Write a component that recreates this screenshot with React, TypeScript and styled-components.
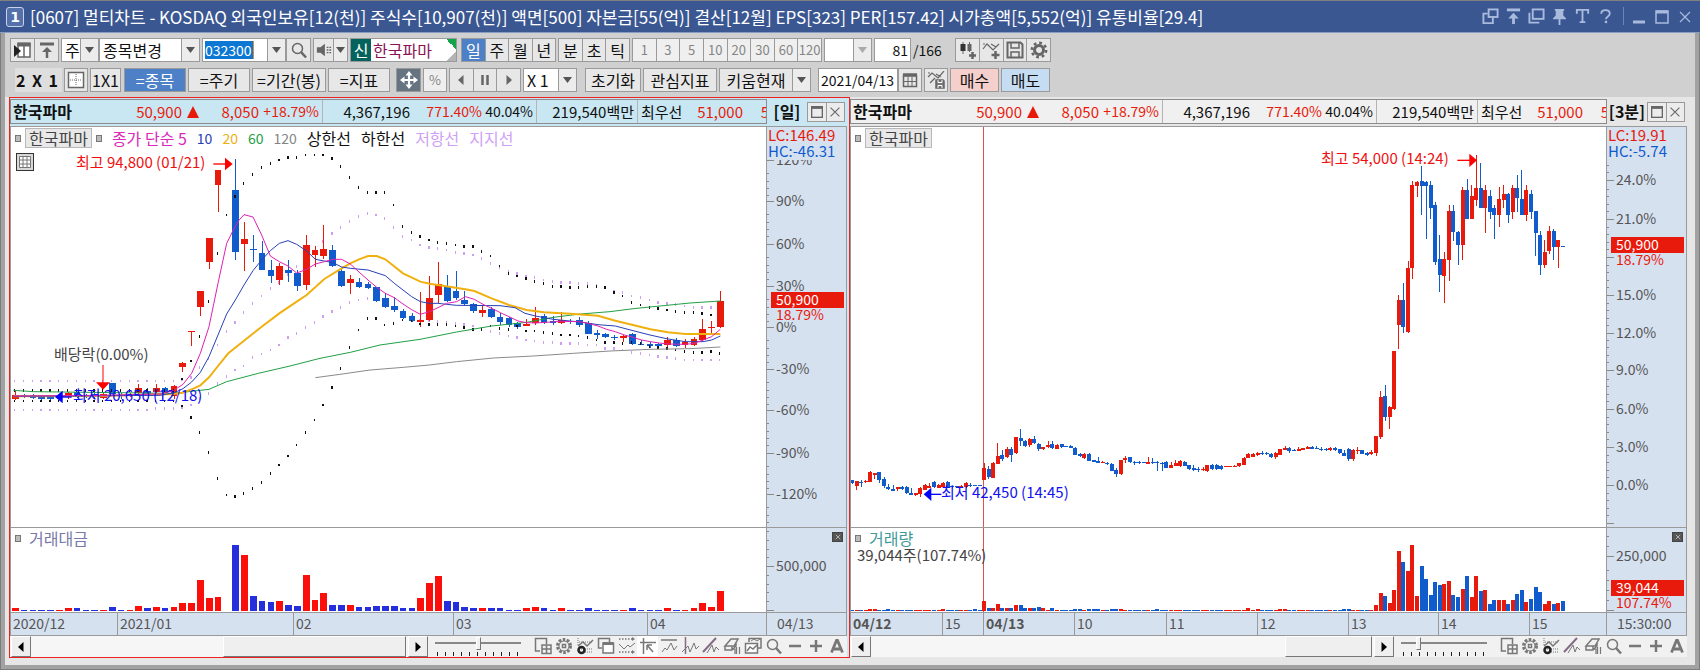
import React from 'react';
import styled, { createGlobalStyle, css } from 'styled-components';

const GlobalStyle = createGlobalStyle`
  *, *::before, *::after { box-sizing: border-box; }
  body {
    margin: 0;
    background: #e6e6e6;
    color: #111;
    font: 16px/20px "Noto Sans CJK KR", sans-serif;
  }
  button, input, select { font: inherit; color: inherit; margin: 0; padding: 0; border-radius: 0; }
`;

const RED = '#e81a0c';
const BLUE = '#105ccd';
const LINE = '#9a9a9a';

/* ------------------------------------------------------------------ icons */

const Svg = styled.svg<{ $size?: number }>`
  display: block;
  flex: none;
  width: ${(p) => p.$size ?? 18}px;
  height: ${(p) => p.$size ?? 18}px;
  fill: none;
  stroke: currentColor;
  stroke-width: 1.5;
`;

const icons: Record<string, React.ReactNode> = {
  panel: (<><rect x="4" y="2.5" width="12" height="13.500" fill="#fff" /><path d="M3.500 3.500h13" strokeWidth="4" /><path d="M10 4v12" /><path d="M0 4v12l7-6z" fill="#222" stroke="none" /></>),
  top: (<><path d="M2 3h14" strokeWidth="3" /><path d="M9 17V9" strokeWidth="2.5" /><path d="M4 11l5-5 5 5z" fill="currentColor" stroke="none" /></>),
  search: (<><circle cx="7.500" cy="7.500" r="5" /><path d="M11 11l5 5.500" strokeWidth="2.5" /></>),
  speaker: (<><path d="M1 6h4l5-4v14l-5-4H1z" fill="currentColor" stroke="none" /><path d="M12 6h2M15 6h2M12 9h2M15 9h2M12 12h2M15 12h2" strokeWidth="1.500" /></>),
  candles: (<><path d="M5 1v12M11.500 1v10" strokeWidth="1" /><rect x="2.500" y="3" width="5" height="7" fill="#333" stroke="none" /><rect x="9.500" y="3" width="4" height="7" fill="currentColor" stroke="none" /><path d="M14.500 11v7M11 14.500h7" strokeWidth="2.5" /></>),
  lineAdd: (<><path d="M1 8l4-5 6 6 6-6M1 3h2M9 3l5 3" strokeWidth="1.200" /><path d="M13.500 10v8M9.500 14h8" strokeWidth="2.5" /></>),
  save: (<><path d="M1.500 1.500h13l2 2v13h-15z" strokeWidth="2" /><path d="M5 2v5h8V2M5 16v-5h8v5" /></>),
  gear: (<><circle cx="9" cy="9" r="4.500" strokeWidth="3" /><circle cx="9" cy="9" r="7.200" strokeWidth="2.500" strokeDasharray="2.800 2.850" /></>),
  grid: (<><rect x="1.500" y="1.500" width="15" height="15" fill="#fff" /><path d="M9 3v12M3 9h12" strokeWidth="1" strokeDasharray="1 1" /></>),
  move: (<><path d="M9 3v12M3 9h12" strokeWidth="2.200" /><path d="M9 0l3.500 4.500h-7zM9 18l3.500-4.500h-7zM0 9l4.500-3.500v7zM18 9l-4.500-3.500v7z" fill="currentColor" stroke="none" /></>),
  prev: <path d="M11.500 4v10L6 9z" fill="currentColor" stroke="none" />,
  pause: <path d="M6.500 4v10M11.500 4v10" strokeWidth="2.5" />,
  next: <path d="M6.500 4v10L12 9z" fill="currentColor" stroke="none" />,
  calendar: (<><path d="M2.500 4.500h13v11h-13z" /><path d="M2 4h14" strokeWidth="3.500" /><path d="M7 6v9M11 6v9M3 10.500h12" strokeWidth="1" /></>),
  lineSave: (<><path d="M1 6l4-4 6 5 6-7M1 2h2M9 3l5 3M3 12l5-5" strokeWidth="1.200" /><path d="M9 9h7l1 1v7H9z" fill="#777" /><path d="M11 9v2.500h4V9M11 17v-2.500h4V17" strokeWidth="1" stroke="#fff" /></>),
  copyGrid: (<><path d="M6 14H1.500V1.500h11V7" /><path d="M8 8h9v8.500H8zM12.500 8v8.500M8 12h9" /></>),
  gearDash: (<><circle cx="9" cy="9" r="6.500" strokeWidth="3" strokeDasharray="2.600 1.480" /><circle cx="9" cy="9" r="5" strokeWidth="1" /><rect x="7.500" y="7.500" width="3" height="3" /></>),
  chartDot: (<><path d="M2 1v8M3 5h13M3 12h13M9 15h8" strokeWidth="1" strokeDasharray="1 1" /><path d="M2 9l5-4 4 4 6-6" /><circle cx="5.500" cy="13" r="3" stroke="#222" strokeWidth="2.5" /></>),
  windows: (<><path d="M5 11H1.500V1.500h11V5" /><rect x="6" y="6" width="10.500" height="10" fill="#fff" /><path d="M6 6.500h10" strokeWidth="3" /></>),
  dotted: (<><path d="M1 2h13M1 15h13" strokeDasharray="1.500 1.500" /><path d="M14 0l3 2-3 2zM14 13l3 2-3 2z" fill="currentColor" stroke="none" /><path d="M1 7l5 5 4-4 2 2 5-4" strokeWidth="1" /></>),
  cursor: (<><path d="M4.500 1v16M1 5.500h16" /><path d="M8 8l6 7M8 8v5M8 8h5" /></>),
  peakTop: (<><path d="M1 3h16" /><path d="M2 15l3-4 2 2 4-7 3 7 3-4" strokeWidth="1" /></>),
  peakV: (<><path d="M4.500 0v17" stroke="#846a85" /><path d="M1 15l6-6 2 6 4-9 2 6 3-3" strokeWidth="1" /></>),
  peakD: (<><path d="M1 15L14 1" stroke="#846a85" strokeWidth="2" /><path d="M5 16l5-8 2 7 2-5 3 3" strokeWidth="1" /></>),
  eraser: (<><path d="M2 9l6-7h7l-4 7zM2 9v4h7l4-4V5M9 9v4" /><path d="M10 12h2v5M13.500 10v7M16.500 10v7" strokeWidth="1.200" /></>),
  images: (<><path d="M5 5V1.500h12V11h-3" /><path d="M7 4l3-2 3 2 3-2" strokeWidth="1" /><rect x="1.500" y="6.500" width="12" height="9.500" fill="#fff" /><path d="M3 14l3-4 3 2 4-4" /></>),
  minus: <path d="M3 9h12" strokeWidth="2.5" />,
  plus: <path d="M3 9h12M9 3v12" strokeWidth="2.5" />,
  letterA: <path d="M3.500 15.500L8.500 3.500h1l5 12M5.500 12h7" strokeWidth="2.800" />,
  link: (<><rect x="7" y="1.500" width="9.500" height="8" strokeWidth="2" /><path d="M6 6H1.500v10h10v-6" strokeWidth="2" /></>),
  toTop: (<><path d="M2 2h14" strokeWidth="3" /><path d="M9 17V9" strokeWidth="3" /><path d="M3.500 11L9 5l5.500 6z" fill="currentColor" stroke="none" /></>),
  stack: (<><rect x="5" y="1.500" width="11.500" height="10" strokeWidth="2" /><path d="M1.500 5v10.500H12" strokeWidth="2" /></>),
  pin: (<path d="M4 1h10v2h-1v5l3 3v1h-6v6H8v-6H2v-1l3-3V3H4z" fill="currentColor" stroke="none" />),
  text: (<><path d="M3 6V2h12v4M9 2v13M6 15h6" strokeWidth="2" /></>),
  help: (<><path d="M4.500 6c0-5 9-5 9 0 0 3-4 3-4 6" strokeWidth="2" /><path d="M9.500 13.500V16" strokeWidth="2.500" /></>),
  winMin: <path d="M3 14h12" strokeWidth="3" />,
  winMax: (<><rect x="3" y="3" width="12" height="12" /><path d="M3 4h12" strokeWidth="3" /></>),
  close: <path d="M4 4l10 10M14 4L4 14" strokeWidth="1.200" />,
};

const Icon = ({ name, size }: { name: string; size?: number }) => (
  <Svg viewBox="0 0 18 18" $size={size} aria-hidden="true">{icons[name]}</Svg>
);

/* ------------------------------------------------------------- window shell */

const Window = styled.main`
  border-top: 1px solid #808080;
`;

const TitleBar = styled.header`
  display: flex;
  align-items: center;
  height: 32px;
  padding: 0 6px;
  background: #3a5792;
  border-bottom: 1px solid #8a9cc2;
  color: #fff;
`;

const WindowNumber = styled.span`
  width: 18px;
  height: 20px;
  margin-right: 6px;
  border: 1px solid #c8d2e8;
  border-radius: 3px;
  background: #5571ab;
  font: bold 14px/18px "DejaVu Sans", sans-serif;
  text-align: center;
`;

const Title = styled.h1`
  flex: 1;
  margin: 0;
  font-size: 17px;
  font-weight: 400;
  line-height: 30px;
  white-space: pre;
`;

const TitleActions = styled.div`
  display: flex;
  gap: 5px;
  color: #a9bbdd;
`;

const TitleButton = styled.button`
  display: grid;
  place-items: center;
  width: 18px;
  height: 20px;
  border: 0;
  background: none;
`;

const TitleDivider = styled.span`
  width: 1px;
  height: 18px;
  margin: 0 1px 0 4px;
  background: #6f86b5;
`;

const Frame = styled.div`
  padding: 0 4px 4px;
  border: 1px solid #7c7c7c;
  border-top: 0;
  background: #a2a2a2;
`;

/* ---------------------------------------------------------------- toolbars */

const Toolbar = styled.div`
  display: flex;
  flex-direction: column;
  gap: 6px;
  padding: 5px;
  background: #d0d0d0;
`;

const ToolRow = styled.div<{ $indent?: boolean }>`
  display: flex;
  gap: 2px;
  height: 24px;
  padding-left: ${(p) => (p.$indent ? 5 : 0)}px;
`;

const Group = styled.div<{ $w: number; $gap?: number }>`
  display: flex;
  flex: none;
  width: ${(p) => p.$w}px;
  margin-left: ${(p) => p.$gap ?? 0}px;
`;

type Tone = 'plain' | 'active' | 'dark' | 'buy' | 'sell' | 'dim';
const tones: Record<Tone, [string, string]> = {
  plain: ['#e7e7e7', '#111'],
  active: ['#4d80c6', '#fff'],
  dark: ['#667482', '#fff'],
  buy: ['#f4cfcb', '#111'],
  sell: ['#c5dcf2', '#111'],
  dim: ['#efefef', '#858585'],
};

const ToolButton = styled.button<{ $tone?: Tone; $icon?: boolean }>`
  display: grid;
  flex: 1;
  place-items: center;
  min-width: 0;
  height: 24px;
  border: 1px solid ${LINE};
  background: ${(p) => tones[p.$tone ?? 'plain'][0]};
  color: ${(p) => (p.$icon ? '#666' : tones[p.$tone ?? 'plain'][1])};
  line-height: 22px;
  white-space: nowrap;
  & + & { border-left-width: 0; }
  ${(p) => p.$tone === 'dark' && css`color: #fff;`}
  ${(p) => p.$tone === 'dim' && css`font-size: 13px;`}
`;

const ComboBox = styled.div<{ $w: number }>`
  display: grid;
  flex: none;
  width: ${(p) => p.$w}px;
  height: 24px;
  border: 1px solid ${LINE};
  background: #fff;
  & > * { grid-area: 1 / 1; }
`;

const Select = styled.select`
  width: 100%;
  height: 22px;
  padding-left: 3px;
  appearance: none;
  border: 0;
  background: none;
`;

const Drop = styled.span<{ $dim?: boolean }>`
  display: grid;
  place-items: center;
  justify-self: end;
  width: 18px;
  height: 22px;
  border-left: 1px solid ${LINE};
  background: #ececec;
  color: ${(p) => (p.$dim ? '#aaa' : '#555')};
  pointer-events: none;
`;

const Arrow = () => (
  <svg width="9" height="6" viewBox="0 0 9 6" aria-hidden="true"><path d="M0 0h9L4.500 6z" fill="currentColor" /></svg>
);

const Combo = ({ w, label, value, dim }: { w: number; label: string; value: string; dim?: boolean }) => (
  <ComboBox $w={w}>
    <Select aria-label={label} defaultValue={value}><option>{value}</option></Select>
    <Drop $dim={dim}><Arrow /></Drop>
  </ComboBox>
);

const TextBox = styled.input<{ $right?: boolean }>`
  flex: 1;
  min-width: 0;
  height: 24px;
  padding: 0 2px;
  border: 1px solid ${LINE};
  background: #fff;
  font-size: 14px;
  text-align: ${(p) => (p.$right ? 'right' : 'left')};
`;

const CodeBox = styled.div`
  display: flex;
  flex: 1;
  align-items: center;
  padding-left: 2px;
  border: 1px solid ${LINE};
  background: #fff;
`;

const CodeInput = styled.input`
  width: 49px;
  height: 18px;
  border: 0;
  border-right: 1px solid #e08a30;
  background: #0d78d4;
  color: #fff;
  font-size: 14px;
`;

const SplitButton = styled.button`
  display: grid;
  place-items: center;
  width: 18px;
  height: 24px;
  border: 1px solid ${LINE};
  border-left: 0;
  background: #ececec;
  color: #555;
`;

const StockName = styled.div`
  display: flex;
  flex: 1;
  align-items: center;
  border: 1px solid ${LINE};
  background:
    linear-gradient(45deg, transparent 50%, #12a54a 50%) 100% 0 / 10px 10px no-repeat,
    linear-gradient(135deg, transparent 50%, #b4b4b4 50%) 100% 100% / 10px 10px no-repeat,
    #fff;
  color: #8b1157;
`;

const NewBadge = styled.span`
  width: 20px;
  height: 22px;
  margin-right: 2px;
  background: #04645d;
  color: #fff;
  line-height: 22px;
  text-align: center;
`;

const BarTotal = styled.span`
  width: 40px;
  font-size: 14px;
  line-height: 24px;
`;

const LayoutLabel = styled.span`
  display: flex;
  justify-content: space-between;
  width: 47px;
  padding: 0 4px 0 1px;
  background: #dedede;
  font-weight: 700;
  line-height: 24px;
`;

/* ----------------------------------------------------------------- panels */

const Panels = styled.section`
  display: grid;
  grid-template-columns: minmax(0, 841fr) minmax(0, 837fr);
  padding: 0 8px 7px 4px;
  background: #e6e6e6;
`;

const Panel = styled.article<{ $active?: boolean }>`
  ${(p) => p.$active
    ? css`border: 1px solid #f02020; padding-right: 2px; background: #c8e7f2;`
    : css`padding: 1px 0;`}
`;

const PanelHead = styled.div`
  display: flex;
  height: 28px;
  padding: 1px 2px 2px 0;
`;

const Quote = styled.div<{ $active?: boolean }>`
  display: flex;
  flex: 1;
  min-width: 0;
  overflow: hidden;
  border: 1px solid #8c8c8c;
  background: ${(p) => (p.$active ? '#c8e7f2' : '#f0f0f0')};
  font-size: 15px;
  line-height: 23px;
  white-space: nowrap;
`;

const Cell = styled.span<{ $w: number; $up?: boolean; $rule?: boolean; $left?: boolean; $small?: boolean }>`
  flex: none;
  width: ${(p) => p.$w}px;
  padding: ${(p) => (p.$rule ? '0 3px 0 0' : p.$left ? '0 0 0 3px' : '0')};
  border-right: ${(p) => (p.$rule ? '1px solid #b4b4b4' : '0')};
  color: ${(p) => (p.$up ? RED : '#111')};
  font-size: ${(p) => (p.$small ? 14 : 15)}px;
  text-align: ${(p) => (p.$left ? 'left' : 'right')};
`;

const QuoteName = styled.strong`
  flex: none;
  width: 100px;
  padding-left: 2px;
  font-size: 16px;
`;

const UpMark = styled.svg`
  flex: none;
  width: 12px;
  height: 12px;
  margin: 6px 0 0 5px;
  fill: ${RED};
`;

const Period = styled.strong`
  flex: none;
  width: 40px;
  font-size: 16px;
  line-height: 25px;
  text-align: center;
`;

const PanelButtons = styled.div`
  display: flex;
  width: 38px;
  height: 20px;
  margin-top: 3px;
`;

const PanelButton = styled.button`
  display: grid;
  flex: 1;
  place-items: center;
  border: 1px solid ${LINE};
  background: #ececec;
  color: #666;
  & + & { border-left: 0; }
`;

const Chart = styled.div`
  display: grid;
  grid-template-columns: minmax(0, 1fr) 81px;
  border-left: 1px solid ${LINE};
`;

const Plot = styled.div`
  position: relative;
  border-top: 1px solid ${LINE};
  background: #fff;
`;

const AxisCell = styled.div`
  position: relative;
  border: 1px solid ${LINE};
  border-bottom: 0;
  background: #d6e1f0;
`;

const Canvas = styled.svg<{ $h: number }>`
  display: block;
  width: 100%;
  height: ${(p) => p.$h}px;
`;

const AxisSvg = styled.svg`
  display: block;
`;

const AxisText = styled.text<{ $fill?: string; $large?: boolean }>`
  fill: ${(p) => p.$fill ?? '#555'};
  font-size: ${(p) => (p.$large ? 15 : 14)}px;
`;

const Legend = styled.div`
  position: absolute;
  top: 1px;
  left: 4px;
  display: flex;
  align-items: center;
  gap: 10px;
  line-height: 18px;
  white-space: nowrap;
`;

const LegendName = styled.span`
  display: flex;
  align-items: center;
  gap: 4px;
`;

const Dot = styled.i`
  width: 6px;
  height: 7px;
  border: 1px solid #777;
  background: #bbb;
`;

const NameTag = styled.span`
  padding: 0 3px;
  border: 1px solid #b8b8b8;
  background: #e8e8e8;
  color: #444;
`;

const LegendItem = styled.span<{ $c: string; $number?: boolean }>`
  color: ${(p) => p.$c};
  font-size: ${(p) => (p.$number ? 14 : 16)}px;
`;

const TableButton = styled.button`
  position: absolute;
  top: 26px;
  left: 5px;
  display: grid;
  place-items: center;
  width: 18px;
  height: 18px;
  border: 1px solid #333;
  background: #d8d8d8;
  color: #666;
`;

const Note = styled.span<{ $x: number; $y: number; $c: string }>`
  position: absolute;
  left: ${(p) => (p.$x / 755) * 100}%;
  top: ${(p) => p.$y}px;
  color: ${(p) => p.$c};
  font-size: 15px;
  white-space: nowrap;
`;

const VolumeTitle = styled.div<{ $c: string }>`
  position: absolute;
  top: 0;
  left: 4px;
  display: flex;
  align-items: center;
  gap: 8px;
  color: ${(p) => p.$c};
`;

const VolumeClose = styled.button`
  position: absolute;
  top: 4px;
  right: 3px;
  display: grid;
  place-items: center;
  width: 11px;
  height: 10px;
  border: 1px solid #444;
  background: #555;
  color: #fff;
`;

const TimeAxis = styled.div<{ $cols: number[] }>`
  display: grid;
  grid-template-columns: ${(p) => p.$cols.map((c) => `minmax(0, ${c}fr)`).join(' ')};
  height: 24px;
  border-top: 1px solid ${LINE};
  border-bottom: 1px solid ${LINE};
  background: #d6e1f0;
`;

const TimeLabel = styled.span<{ $strong?: boolean }>`
  padding-left: 2px;
  color: #555;
  font-size: 14px;
  font-weight: ${(p) => (p.$strong ? 700 : 400)};
  line-height: 20px;
  & + & { border-left: 1px solid ${LINE}; }
`;

const TimeEnd = styled.div`
  padding-left: 10px;
  border: 1px solid ${LINE};
  background: #d6e1f0;
  color: #555;
  font-size: 14px;
  line-height: 20px;
`;

const Foot = styled.div`
  display: flex;
  height: 21px;
  padding-left: 1px;
  background: #f1f1f1;
`;

const ScrollBar = styled.div`
  display: flex;
  flex: 1;
  min-width: 0;
  background: #f6f6f6;
`;

const ScrollButton = styled.button`
  display: grid;
  flex: none;
  place-items: center;
  width: 20px;
  border: 1px solid;
  border-color: #fff #777 #777 #fff;
  background: #efefef;
  color: #000;
`;

const Track = styled.div`
  flex: 1;
`;

const Thumb = styled.div<{ $w: string }>`
  width: ${(p) => p.$w};
  margin-right: 2px;
  border: 1px solid;
  border-color: #fff #777 #777 #fff;
  background: #efefef;
`;

const ZoomBox = styled.div`
  flex: none;
  width: 86px;
  margin: 0 11px 0 7px;
`;

const ZoomSlider = styled.input`
  display: block;
  width: 100%;
  height: 14px;
  appearance: none;
  background: linear-gradient(#888, #888) 0 6px / 100% 2px no-repeat;
  &::-webkit-slider-thumb {
    appearance: none;
    width: 5px;
    height: 13px;
    border: 1px solid;
    border-color: #fff #777 #777 #fff;
    background: #f1f1f1;
  }
`;

const ZoomTicks = styled.div`
  height: 4px;
  margin: 2px 2px 0;
  background: repeating-linear-gradient(90deg, #222 0 1px, transparent 1px 8px);
`;

const FootTools = styled.div`
  display: flex;
  color: #777;
`;

const FootButton = styled.button<{ $on?: boolean }>`
  display: grid;
  place-items: center;
  width: 21px;
  height: 20px;
  border: 0;
  background: ${(p) => (p.$on ? '#fff' : 'none')};
`;

/* ------------------------------------------------------------- chart data */
/* Chart units run three to a pixel. A bar is [open/close direction, high, body top, body bottom, low]. */

type Bar = number[] | null;

const dailyBars: Bar[] = [
  [1, 813, 825, 837, 840], [0, 821, 826, 829, 833], [0, 821, 825, 834, 838], [0, 826, 829, 838, 840], [0, 829, 832, 836, 840],
  [1, 822, 827, 831, 834], [1, 815, 820, 830, 838], [0, 815, 817, 828, 833], [0, 822, 825, 828, 833], [0, 818, 823, 830, 835],
  [1, 818, 822, 833, 838], [0, 788, 790, 822, 828], [0, 818, 824, 827, 836], [1, 820, 824, 827, 830], [1, 792, 805, 820, 825],
  [0, 805, 812, 822, 826], [1, 792, 803, 815, 820], [0, 800, 803, 820, 824], [1, 795, 798, 828, 838], [1, 727, 730, 742, 756],
  [1, 633, 633, 637, 678], [1, 514, 514, 562, 588], [1, 355, 355, 427, 448], [1, 150, 150, 194, 277], null,
  [0, 116, 210, 396, 419], [1, 307, 357, 371, 453], [0, 345, 386, 389, 427], [0, 364, 398, 449, 450], [0, 420, 450, 468, 490],
  [1, 430, 439, 479, 495], [0, 420, 450, 458, 487], [0, 450, 458, 497, 513], [1, 345, 375, 494, 510], [1, 378, 390, 405, 441],
  [1, 315, 386, 408, 418], [0, 375, 390, 437, 440], [0, 445, 453, 497, 500], [1, 465, 477, 490, 521], [0, 473, 487, 501, 503],
  [0, 485, 491, 505, 508], [0, 500, 502, 543, 546], [0, 520, 533, 562, 563], [0, 530, 558, 569, 577], [0, 568, 573, 595, 597],
  [0, 578, 588, 604, 607], [1, 517, 600, 606, 621], [1, 468, 533, 599, 603], [1, 427, 491, 524, 548], [0, 465, 502, 543, 546],
  [0, 453, 513, 534, 541], [0, 513, 540, 551, 556], [0, 550, 552, 573, 580], [1, 555, 570, 580, 592], [0, 560, 567, 590, 593],
  [0, 580, 590, 606, 614], [0, 590, 593, 616, 620], [0, 605, 609, 621, 627], [1, 598, 611, 617, 618], [1, 562, 593, 609, 614],
  [0, 583, 587, 609, 611], [0, 588, 604, 608, 614], [1, 577, 600, 609, 611], [0, 597, 602, 606, 611], [0, 590, 600, 614, 620],
  [0, 603, 608, 641, 642], [0, 630, 640, 644, 656], [0, 640, 642, 652, 655], [0, 645, 651, 655, 660], [1, 645, 648, 654, 667],
  [0, 640, 642, 672, 676], [0, 660, 672, 675, 676], [0, 665, 672, 679, 683], [0, 670, 672, 678, 686], [1, 650, 659, 675, 687],
  [0, 655, 659, 677, 680], [1, 658, 667, 674, 684], [1, 652, 656, 674, 678], [1, 597, 627, 659, 663], [1, 603, 620, 625, 638],
  [1, 514, 544, 621, 623],
];

const dailyVolume = [
  8, 4, 4, 4, 4, 4, 8, 8, 4, 4, 4, 12, 4, 4, 15, 8, 12, 8, 12, 23, 23, 94, 38, 42, 0, 199, 169, 45, 30, 27, 31, 19, 16, 109, 34, 53, 19, 19, 19, 12,
  12, 16, 16, 16, 8, 8, 38, 83, 105, 30, 27, 12, 8, 8, 8, 8, 4, 4, 8, 12, 8, 4, 8, 4, 4, 8, 4, 4, 4, 4, 8, 4, 4, 4, 8, 4, 4, 8, 23, 12, 61,
];

const flat = (y: number, n: number) => Array<number>(n).fill(y);

const upperLimit = [...flat(811, 19), 777, 723, 649, 545, 401, 285, 230, 191, 164, 143, 131, 120, 112, 112, 105, 105, 105, 116, 139, 172, 203, 217, 217, 217,
  255, 319, 338, 349, 360, 367, 371, 375, 379, 379, 394, 408, 438, 460, 468, 476, 484, 491, 499, 499, 502, 502, 499, 499, 502, 517, 528, 547, 555, 562, 566, 570, 574, 577, 577, 581, 585];
const lowerLimit = [...flat(843, 19), 858, 893, 937, 997, 1076, 1125, 1129, 1121, 1106, 1087, 1061, 1035, 1008, 975, 937, 900, 855, 802, 746, 682, 630, 596, 596, 615,
  611, 600, 603, 612, 614, 614, 614, 618, 622, 629, 629, 618, 626, 629, 618, 633, 633, 637, 641, 645, 645, 648, 652, 660, 667, 668, 671, 667, 671, 679, 682, 685, 690, 694, 697, 697, 694, 701];
const resistance = [...flat(783, 19), 778, 772, 742, 715, 675, 634, 607, 577, 551, 528, 506, 488, 464, 440, 418, 395, 364, 341, 322, 304, 290, 281, 285, 296,
  322, 349, 360, 375, 382, 386, 390, 397, 401, 405, 416, 431, 442, 453, 461, 468, 472, 480, 484, 487, 487, 491, 491, 495, 502, 513, 517, 528, 532, 540, 547, 550, 553, 558, 562, 562, 562];
const support = [...flat(870, 16), 866, 866, 866, 862, 855, 835, 820, 790, 769, 750, 738, 712, 702, 690, 675, 653, 641, 622, 607, 589, 574, 562, 547, 540, 536, 536, 550,
  565, 580, 590, 600, 603, 605, 607, 610, 614, 618, 626, 634, 641, 648, 652, 660, 663, 667, 667, 671, 671, 671, 675, 675, 686, 686, 690, 697, 701, 705, 709, 712, 716, 720, 720, 720, 720, 720];

const averages: { color: string; width: number; points: string }[] = [
  { color: '#8a8a8a', width: 1, points: '946,773 1020,763 1110,750 1210,742 1288,735 1370,725 1480,714 1600,708 1720,700 1830,693 1950,688 2070,686 2161,681' },
  { color: '#22a045', width: 1, points: '40,811 100,815 520,820 627,808 680,785 775,760 870,738 960,715 1051,697 1140,675 1260,658 1370,636 1475,618 1580,607 1660,592 1740,582 1830,575 1900,566 1980,558 2070,549 2161,543' },
  { color: '#f0b010', width: 2, points: '40,829 300,828 520,822 549,818 580,806 601,796 627,772 654,738 685,700 732,662 785,620 838,580 890,545 920,525 973,477 1025,445 1051,430 1077,418 1104,408 1130,408 1156,418 1209,460 1261,485 1288,491 1314,495 1396,508 1423,513 1475,535 1527,555 1580,570 1632,577 1711,581 1794,587 1846,602 1899,615 1951,628 2004,637 2056,642 2161,642' },
  { color: '#2840b8', width: 1, points: '40,829 480,826 523,818 549,806 575,786 601,757 627,710 654,645 680,582 706,540 732,495 759,452 785,420 811,392 838,370 864,362 890,373 920,393 946,418 973,423 999,428 1025,441 1051,445 1104,450 1156,467 1183,490 1235,530 1261,545 1288,550 1314,550 1340,553 1370,556 1500,557 1545,563 1575,580 1606,588 1660,598 1740,606 1794,614 1846,618 1899,632 1950,645 2004,657 2056,665 2109,665 2135,660 2161,648' },
  { color: '#e020b0', width: 1, points: '40,828 300,826 480,822 520,812 549,793 575,760 601,700 627,620 654,490 680,370 700,330 716,302 732,284 759,291 785,345 811,408 838,425 864,438 890,459 920,448 946,432 973,425 999,418 1025,418 1051,432 1077,456 1104,480 1130,502 1156,520 1183,533 1209,552 1235,569 1261,583 1288,575 1314,563 1340,550 1370,545 1396,530 1423,538 1449,553 1475,565 1501,578 1527,590 1554,603 1580,608 1606,609 1685,604 1738,605 1764,610 1794,618 1820,628 1846,635 1873,645 1899,652 1925,660 1951,665 1978,669 2004,672 2056,673 2083,670 2109,660 2135,650 2161,628' },
];

const morningBars: number[][] = [
  [0, 240, 240, 250, 252], [1, 242, 244, 258, 270], [0, 240, 245, 250, 262], [1, 240, 243, 247, 250], [1, 212, 217, 246, 246], [1, 218, 218, 224, 236],
  [0, 217, 217, 240, 250], [0, 232, 236, 258, 264], [0, 252, 262, 267, 270], [0, 255, 266, 272, 274], [1, 260, 262, 268, 272], [0, 258, 260, 268, 270],
  [0, 258, 260, 280, 282], [0, 265, 280, 285, 286], [1, 278, 280, 286, 288], [1, 262, 264, 282, 290], [1, 253, 256, 270, 270], [1, 248, 258, 264, 264],
  [0, 243, 247, 262, 264], [1, 252, 256, 264, 264], [1, 245, 248, 262, 265], [0, 243, 245, 262, 262], [0, 258, 259, 262, 264], [0, 258, 259, 262, 264],
  [1, 255, 257, 262, 264], [1, 247, 249, 262, 265], [0, 250, 255, 259, 262], [0, 255, 255, 258, 258], [0, 255, 255, 258, 258],
  [1, 190, 205, 240, 240], [0, 198, 207, 230, 236], [1, 187, 188, 234, 234], [1, 130, 169, 191, 193], [0, 150, 166, 176, 184], [1, 140, 146, 170, 173],
  [0, 142, 146, 164, 187], [1, 110, 111, 158, 162], [0, 87, 113, 122, 138], [0, 120, 124, 138, 142], [1, 113, 116, 135, 142], [0, 108, 116, 130, 131],
  [0, 130, 132, 146, 153], [1, 140, 141, 146, 150], [1, 124, 136, 142, 145], [0, 122, 133, 145, 147], [1, 132, 134, 146, 148], [0, 131, 133, 141, 143],
  [0, 137, 138, 141, 142], [0, 135, 137, 143, 144], [0, 140, 143, 165, 166], [0, 160, 162, 168, 170], [1, 160, 162, 173, 176], [0, 160, 162, 182, 184],
  [0, 180, 181, 185, 187], [0, 172, 183, 189, 190], [1, 183, 185, 189, 190], [0, 187, 188, 192, 196], [0, 190, 192, 212, 214], [0, 205, 210, 222, 231],
  [1, 180, 181, 222, 224], [1, 169, 173, 181, 189], [0, 170, 172, 186, 190], [0, 183, 186, 190, 196], [0, 184, 187, 190, 192], [0, 186, 187, 190, 190],
  [1, 172, 186, 191, 192], [0, 174, 186, 190, 192], [0, 184, 186, 190, 214], [0, 186, 188, 191, 214], [0, 184, 187, 203, 205], [1, 187, 196, 203, 203],
  [1, 180, 190, 198, 199], [1, 180, 184, 198, 200], [0, 183, 185, 197, 198], [0, 194, 195, 208, 210], [0, 195, 205, 210, 213], [0, 200, 207, 211, 216],
  [1, 200, 206, 211, 212], [1, 194, 195, 213, 215], [0, 193, 195, 208, 210], [0, 193, 194, 208, 210], [0, 196, 198, 208, 210], [1, 197, 198, 201, 202],
  [1, 197, 198, 201, 202], [1, 196, 197, 201, 202], [1, 189, 190, 198, 200], [1, 170, 173, 195, 195], [1, 158, 162, 175, 175], [1, 158, 161, 170, 171],
  [1, 156, 159, 165, 167], [0, 152, 158, 163, 166], [0, 157, 159, 163, 166], [0, 160, 162, 172, 173], [1, 157, 160, 172, 176], [1, 146, 147, 164, 166],
  [1, 139, 143, 150, 150], [0, 142, 144, 154, 160], [0, 147, 149, 153, 153], [1, 141, 146, 153, 154], [1, 143, 145, 149, 150], [1, 138, 140, 147, 148],
  [0, 138, 140, 146, 147], [0, 139, 143, 146, 146], [0, 141, 146, 150, 152], [0, 145, 147, 151, 152], [1, 142, 144, 151, 152], [0, 141, 144, 150, 154],
  [0, 146, 148, 160, 162], [0, 150, 158, 168, 168], [0, 145, 148, 176, 182], [1, 148, 150, 176, 182], [1, 142, 150, 153, 162], [0, 150, 151, 161, 163],
  [0, 157, 160, 164, 167], [1, 150, 157, 161, 165], [1, 108, 109, 160, 167],
];

const minuteBars: Bar[] = [
  ...morningBars.map(([d, h, t, b, l]) => [d, h + 840, t + 840, b + 840, l + 840]),
  [1, 813, 832, 950, 958], [0, 795, 828, 891, 902], [1, 858, 862, 892, 928], [1, 693, 694, 866, 870], [1, 525, 541, 614, 686], [0, 490, 541, 622, 640],
  [1, 423, 443, 637, 640], [1, 183, 195, 445, 476], [1, 183, 185, 198, 232], [0, 138, 184, 198, 284], [0, 183, 185, 198, 356], [0, 183, 196, 265, 296],
  [0, 246, 255, 426, 434], [0, 345, 416, 465, 517], [1, 397, 416, 468, 550], [1, 255, 274, 419, 484], [0, 255, 274, 336, 362], [0, 334, 335, 375, 434],
  [1, 202, 210, 374, 419], [0, 176, 210, 296, 296], [1, 196, 229, 296, 296], [1, 105, 203, 239, 258], [0, 130, 203, 265, 265], [1, 196, 210, 265, 338],
  [0, 210, 229, 276, 296], [0, 255, 263, 284, 356], [1, 202, 237, 284, 322], [1, 196, 222, 239, 265], [0, 220, 221, 284, 310], [1, 196, 203, 276, 296],
  [0, 165, 203, 233, 277], [0, 150, 237, 284, 284], [1, 196, 210, 284, 303], [0, 210, 222, 276, 296], [0, 273, 274, 338, 408], [0, 334, 346, 434, 464],
  [1, 360, 397, 434, 445], [1, 318, 334, 393, 401], [0, 326, 334, 381, 419], [1, 360, 361, 381, 445], [0, 379, 379, 382, 382],
];

const minuteVolume = [
  4, 4, 4, 4, 7, 7, 4, 4, 7, 4, 4, 4, 4, 4, 4, 4, 4, 4, 4, 4, 7, 4, 4, 4, 4, 4, 4, 7, 4, 30, 10, 10, 22, 10, 10, 10, 18, 18, 8, 8, 8, 11, 8, 4, 8, 4, 4, 4, 4,
  7, 7, 4, 7, 7, 7, 4, 4, 7, 7, 7, 4, 4, 4, 4, 4, 4, 4, 7, 4, 4, 4, 4, 4, 4, 4, 4, 4, 4, 4, 4, 4, 4, 4, 4, 4, 4, 4, 8, 4, 7, 4, 4, 4, 4, 7, 7,
  4, 4, 4, 4, 4, 4, 4, 4, 4, 4, 4, 4, 7, 7, 4, 4, 4, 4, 4, 18, 53, 45, 23, 63, 179, 146, 119, 198, 45, 134, 97, 48, 86, 78, 82, 89, 48, 41, 67, 104, 41, 104,
  60, 63, 22, 33, 33, 33, 22, 33, 52, 63, 27, 37, 71, 56, 22, 29, 22, 25, 29,
];

/* ---------------------------------------------------------- chart drawing */

const Candles = ({ bars, x0, step, body }: { bars: Bar[]; x0: number; step: number; body: number }) => (
  <g shapeRendering="crispEdges">
    {bars.map((bar, i) => {
      if (!bar) return null;
      const [up, high, top, bottom, low] = bar;
      const x = Math.round(x0 + step * i);
      return (
        <g key={i} fill={up ? RED : BLUE}>
          <rect x={x - 1} y={high} width="3" height={Math.max(low - high, 3)} />
          <rect x={x - Math.floor(body / 2)} y={top} width={body} height={Math.max(bottom - top, 3)} />
        </g>
      );
    })}
  </g>
);

const Volumes = ({ bars, values, x0, step, body, up, down }: {
  bars: Bar[]; values: number[]; x0: number; step: number; body: number; up: string; down: string;
}) => (
  <g shapeRendering="crispEdges">
    {values.map((v, i) => (
      <rect key={i} x={Math.round(x0 + step * i) - Math.floor(body / 2)} y={633 - v} width={body} height={v} fill={bars[i]?.[0] ? up : down} />
    ))}
  </g>
);

const Dots = ({ values, color }: { values: number[]; color: string }) => (
  <g fill={color} shapeRendering="crispEdges">
    {values.map((y, i) => <rect key={i} x={Math.round(42 + 26.44 * i)} y={y - 4} width="4" height="8" />)}
  </g>
);

type AxisProps = {
  lc: string; hc: string; labels: [string, number][]; minor: number[]; tagY: number;
};

const PriceAxis = ({ lc, hc, labels, minor, tagY }: AxisProps) => (
  <AxisSvg width="79" height="400" viewBox="0 0 79 400">
    {labels.map(([text, y]) => (
      <g key={y}>
        <path d={`M0 ${y}h7`} stroke="#8a8a8a" shapeRendering="crispEdges" />
        {minor.map((m) => <path key={m} d={`M0 ${y + m}h2`} stroke="#8a8a8a" shapeRendering="crispEdges" />)}
        <AxisText x="9" y={y + 5}>{text}</AxisText>
      </g>
    ))}
    <rect x="0" y="0" width="79" height="33" fill="#d6e1f0" />
    <AxisText x="1" y="14" $large $fill={RED}>{lc}</AxisText>
    <AxisText x="1" y="30" $large $fill={BLUE}>{hc}</AxisText>
    <rect x="8" y={tagY + 16} width="60" height="14" fill="#d6e1f0" />
    <rect x="4" y={tagY} width="73" height="16" fill={RED} />
    <AxisText x="9" y={tagY + 13} $fill="#fff">50,900</AxisText>
    <AxisText x="9" y={tagY + 28} $fill={RED}>18.79%</AxisText>
  </AxisSvg>
);

const dailyLabels: [string, number][] = [['120%', 33], ['90%', 74], ['60%', 117], ['30%', 159], ['0%', 200], ['-30%', 242], ['-60%', 283], ['-90%', 326], ['-120%', 367]];
const minuteLabels: [string, number][] = [['24.0%', 53], ['21.0%', 92], ['', 130], ['15.0%', 168], ['12.0%', 206], ['9.0%', 243], ['6.0%', 282], ['3.0%', 320], ['0.0%', 358], ['', 396]];

const QuoteRow = ({ active, period }: { active?: boolean; period: string }) => (
  <PanelHead>
    <Quote $active={active}>
      <QuoteName>한국파마</QuoteName>
      <Cell $w={71} $up>50,900</Cell>
      <UpMark viewBox="0 0 12 12"><path d="M6 0l6 12H0z" /></UpMark>
      <Cell $w={60} $up>8,050</Cell>
      <Cell $w={64} $up $rule $small>+18.79%</Cell>
      <Cell $w={87}>4,367,196</Cell>
      <Cell $w={72} $up $small>771.40%</Cell>
      <Cell $w={55} $rule $small>40.04%</Cell>
      <Cell $w={101} $rule>219,540백만</Cell>
      <Cell $w={54} $left>최우선</Cell>
      <Cell $w={51} $up>51,000</Cell>
      <Cell $w={26} $up>5</Cell>
    </Quote>
    <Period>{period}</Period>
    <PanelButtons>
      <PanelButton aria-label="최대화"><Icon name="winMax" size={16} /></PanelButton>
      <PanelButton aria-label="닫기"><Icon name="close" size={16} /></PanelButton>
    </PanelButtons>
  </PanelHead>
);

const PanelFoot = ({ thumb, zoom, tools }: { thumb: string; zoom: number; tools: string[] }) => (
  <Foot>
    <ScrollBar>
      <ScrollButton aria-label="이전"><Icon name="prev" size={18} /></ScrollButton>
      <Track />
      <Thumb $w={thumb} />
      <ScrollButton aria-label="다음"><Icon name="next" size={18} /></ScrollButton>
    </ScrollBar>
    <ZoomBox>
      <ZoomSlider type="range" min="0" max="100" defaultValue={zoom} aria-label="봉 간격" />
      <ZoomTicks />
    </ZoomBox>
    <FootTools>
      {tools.map((t) => <FootButton key={t} $on={t === 'cursor'} aria-label={t}><Icon name={t} size={18} /></FootButton>)}
    </FootTools>
  </Foot>
);

const DailyPanel = () => (
  <Panel $active>
    <QuoteRow active period="[일]" />
    <Chart>
      <Plot>
        <Canvas $h={400} viewBox="33 21 2265 1200" preserveAspectRatio="none">
          <Dots values={resistance} color="#cf9ff5" />
          <Dots values={support} color="#cf9ff5" />
          <Candles bars={dailyBars} x0={46} step={26.44} body={20} />
          <Dots values={upperLimit} color="#111" />
          <Dots values={lowerLimit} color="#111" />
          {averages.map((a) => (
            <polyline key={a.color} points={a.points} fill="none" stroke={a.color} strokeWidth={a.width} vectorEffect="non-scaling-stroke" />
          ))}
          <path d="M640 132h40" stroke="#f00" strokeWidth="4" />
          <path d="M675 113v38l23-19z" fill="#f00" />
          <path d="M309 735v60" stroke="#f00" strokeWidth="3" />
          <path d="M288 787h42l-21 22z" fill="#f00" />
          <path d="M185 831h30" stroke="#00f" strokeWidth="4" />
          <path d="M188 812v38l-23-19z" fill="#00f" />
        </Canvas>
        <Legend>
          <LegendName>
            <Dot /><NameTag>한국파마</NameTag><Dot />
          </LegendName>
          <LegendItem $c="#d92ab8">종가 단순 5</LegendItem>
          <LegendItem $number $c="#2840b8">10</LegendItem>
          <LegendItem $number $c="#ecb011">20</LegendItem>
          <LegendItem $number $c="#22a045">60</LegendItem>
          <LegendItem $number $c="#858585">120</LegendItem>
          <LegendItem $c="#111">상한선</LegendItem>
          <LegendItem $c="#111">하한선</LegendItem>
          <LegendItem $c="#cf9ff5">저항선</LegendItem>
          <LegendItem $c="#cf9ff5">지지선</LegendItem>
        </Legend>
        <TableButton aria-label="데이터 표">
          <svg width="12" height="12" viewBox="0 0 12 12" fill="#fff" stroke="#777"><path d="M.5.5h11v11H.5zM4 0v12M8 0v12M0 4h12M0 8h12" /></svg>
        </TableButton>
        <Note $x={65} $y={25} $c="#f01010">최고 94,800 (01/21)</Note>
        <Note $x={43} $y={217} $c="#444">배당락(0.00%)</Note>
        <Note $x={62} $y={258} $c="#1010f0">최저 20,650 (12/18)</Note>
      </Plot>
      <AxisCell>
        <PriceAxis lc="LC:146.49" hc="HC:-46.31" labels={dailyLabels} minor={[13, 21, 28, 35]} tagY={165} />
      </AxisCell>
      <Plot>
        <Canvas $h={84} viewBox="33 384 2265 252" preserveAspectRatio="none">
          <Volumes bars={dailyBars} values={dailyVolume} x0={46} step={26.44} body={20} up="#fb0f0a" down="#2530dc" />
        </Canvas>
        <VolumeTitle $c="#7878a8"><Dot />거래대금</VolumeTitle>
      </Plot>
      <AxisCell>
        <AxisSvg width="79" height="84" viewBox="0 0 79 84">
          <path d="M0 38h7M0 82h7M0 3h2M0 12h2M0 21h2M0 29h2M0 47h2M0 56h2M0 64h2M0 73h2" stroke="#8a8a8a" shapeRendering="crispEdges" />
          <AxisText x="9" y="43">500,000</AxisText>
        </AxisSvg>
        <VolumeClose aria-label="거래대금 닫기"><Icon name="close" size={8} /></VolumeClose>
      </AxisCell>
      <TimeAxis $cols={[106, 176, 160, 194, 119]}>
        {['2020/12', '2021/01', '02', '03', '04'].map((t) => <TimeLabel key={t}>{t}</TimeLabel>)}
      </TimeAxis>
      <TimeEnd>04/13</TimeEnd>
    </Chart>
    <PanelFoot thumb="44%" zoom={51} tools={['copyGrid', 'gearDash', 'chartDot', 'windows', 'dotted', 'cursor', 'peakTop', 'peakV', 'peakD', 'eraser', 'images', 'search', 'minus', 'plus', 'letterA']} />
  </Panel>
);

const minuteTimes: [string, boolean?][] = [['04/12', true], ['15'], ['04/13', true], ['10'], ['11'], ['12'], ['13'], ['14'], ['15']];

const MinutePanel = () => (
  <Panel>
    <QuoteRow period="[3분]" />
    <Chart>
      <Plot>
        <Canvas $h={400} viewBox="33 21 2265 1200" preserveAspectRatio="none">
          <path d="M430 21v1200" stroke="#e05050" strokeWidth="1" vectorEffect="non-scaling-stroke" shapeRendering="crispEdges" />
          <Candles bars={minuteBars} x0={36} step={13.67} body={12} />
          <path d="M1852 121h40" stroke="#f00" strokeWidth="4" />
          <path d="M1888 101v40l23-20z" fill="#f00" />
          <path d="M272 1123h32" stroke="#00f" strokeWidth="4" />
          <path d="M274 1103v40l-23-20z" fill="#00f" />
        </Canvas>
        <Legend><LegendName><Dot /><NameTag>한국파마</NameTag></LegendName></Legend>
        <Note $x={470} $y={21} $c="#f01010">최고 54,000 (14:24)</Note>
        <Note $x={90} $y={355} $c="#1010f0">최저 42,450 (14:45)</Note>
      </Plot>
      <AxisCell>
        <PriceAxis lc="LC:19.91" hc="HC:-5.74" labels={minuteLabels} minor={[-8, -15, -23, -30]} tagY={110} />
      </AxisCell>
      <Plot>
        <Canvas $h={84} viewBox="33 384 2265 252" preserveAspectRatio="none">
          <path d="M430 384v252" stroke="#e05050" strokeWidth="1" vectorEffect="non-scaling-stroke" shapeRendering="crispEdges" />
          <Volumes bars={minuteBars} values={minuteVolume} x0={36} step={13.67} body={12} up={RED} down={BLUE} />
        </Canvas>
        <VolumeTitle $c="#3f9a9a"><Dot />거래량</VolumeTitle>
        <Note $x={6} $y={17} $c="#444">39,044주(107.74%)</Note>
      </Plot>
      <AxisCell>
        <AxisSvg width="79" height="84" viewBox="0 0 79 84">
          <path d="M0 28h7M0 82h7M0 8h2M0 18h2M0 42h2M0 52h2M0 62h2M0 72h2" stroke="#8a8a8a" shapeRendering="crispEdges" />
          <AxisText x="9" y="33">250,000</AxisText>
          <rect x="4" y="52" width="73" height="16" fill={RED} />
          <AxisText x="9" y="65" $fill="#fff">39,044</AxisText>
          <AxisText x="9" y="80" $fill={RED}>107.74%</AxisText>
        </AxisSvg>
        <VolumeClose aria-label="거래량 닫기"><Icon name="close" size={8} /></VolumeClose>
      </AxisCell>
      <TimeAxis $cols={[91, 41, 91, 92, 91, 91, 90, 91, 77]}>
        {minuteTimes.map(([t, strong], i) => <TimeLabel key={i} $strong={strong}>{t}</TimeLabel>)}
      </TimeAxis>
      <TimeEnd>15:30:00</TimeEnd>
    </Chart>
    <PanelFoot thumb="16%" zoom={18} tools={['copyGrid', 'gearDash', 'chartDot', 'peakD', 'eraser', 'search', 'minus', 'plus', 'letterA']} />
  </Panel>
);

/* -------------------------------------------------------------------- app */

const App = () => (
  <>
    <GlobalStyle />
    <Window>
      <TitleBar>
        <WindowNumber>1</WindowNumber>
        <Title>[0607] 멀티차트 - KOSDAQ 외국인보유[12(천)] 주식수[10,907(천)] 액면[500] 자본금[55(억)] 결산[12월] EPS[323] PER[157.42] 시가총액[5,552(억)] 유통비율[29.4]</Title>
        <TitleActions>
          {['link', 'toTop', 'stack', 'pin', 'text', 'help'].map((n) => <TitleButton key={n} aria-label={n}><Icon name={n} size={17} /></TitleButton>)}
          <TitleDivider />
          {['winMin', 'winMax', 'close'].map((n) => <TitleButton key={n} aria-label={n}><Icon name={n} /></TitleButton>)}
        </TitleActions>
      </TitleBar>
      <Frame>
        <Toolbar>
          <ToolRow>
            <Group $w={49}>
              <ToolButton $icon aria-label="종목창"><Icon name="panel" /></ToolButton>
              <ToolButton $icon aria-label="맨 위로"><Icon name="top" /></ToolButton>
            </Group>
            <Group $w={139}>
              <Combo w={38} label="구분" value="주" />
              <Combo w={101} label="변경 대상" value="종목변경" />
            </Group>
            <Group $w={109}>
              <CodeBox><CodeInput aria-label="종목코드" defaultValue="032300" /></CodeBox>
              <SplitButton aria-label="최근 종목"><Arrow /></SplitButton>
              <Group $w={25}><ToolButton $icon aria-label="종목 검색"><Icon name="search" /></ToolButton></Group>
            </Group>
            <Group $w={35}>
              <ToolButton $icon aria-label="소리"><Icon name="speaker" size={16} /></ToolButton>
              <Group $w={14}><SplitButton aria-label="소리 설정"><Arrow /></SplitButton></Group>
            </Group>
            <Group $w={107}>
              <StockName><NewBadge>신</NewBadge>한국파마</StockName>
            </Group>
            <Group $w={95} $gap={2}>
              {['일', '주', '월', '년'].map((t) => <ToolButton key={t} $tone={t === '일' ? 'active' : 'plain'}>{t}</ToolButton>)}
            </Group>
            <Group $w={72}>
              {['분', '초', '틱'].map((t) => <ToolButton key={t}>{t}</ToolButton>)}
            </Group>
            <Group $w={190}>
              {['1', '3', '5', '10', '20', '30', '60', '120'].map((t) => <ToolButton key={t} $tone="dim">{t}</ToolButton>)}
            </Group>
            <Combo w={48} label="주기 직접 선택" value="" dim />
            <Group $w={37}><TextBox aria-label="표시 봉 수" $right defaultValue="81" /></Group>
            <BarTotal>/166</BarTotal>
            <Group $w={96}>
              <ToolButton $icon aria-label="봉 추가"><Icon name="candles" /></ToolButton>
              <ToolButton $icon aria-label="지표 추가"><Icon name="lineAdd" /></ToolButton>
              <ToolButton $icon aria-label="저장"><Icon name="save" /></ToolButton>
              <ToolButton $icon aria-label="설정"><Icon name="gear" /></ToolButton>
            </Group>
          </ToolRow>
          <ToolRow $indent>
            <LayoutLabel><span>2</span><span>X</span><span>1</span></LayoutLabel>
            <Group $w={24}><ToolButton $icon aria-label="화면 분할"><Icon name="grid" /></ToolButton></Group>
            <Group $w={31}><ToolButton>1X1</ToolButton></Group>
            <Group $w={62} $gap={1}><ToolButton $tone="active">=종목</ToolButton></Group>
            <Group $w={62}><ToolButton>=주기</ToolButton></Group>
            <Group $w={74}><ToolButton>=기간(봉)</ToolButton></Group>
            <Group $w={62}><ToolButton>=지표</ToolButton></Group>
            <Group $w={25} $gap={4}><ToolButton $icon $tone="dark" aria-label="이동"><Icon name="move" /></ToolButton></Group>
            <Group $w={24}><ToolButton $tone="dim">%</ToolButton></Group>
            <Group $w={72}>
              <ToolButton $icon aria-label="뒤로"><Icon name="prev" /></ToolButton>
              <ToolButton $icon aria-label="멈춤"><Icon name="pause" /></ToolButton>
              <ToolButton $icon aria-label="앞으로"><Icon name="next" /></ToolButton>
            </Group>
            <Combo w={54} label="배속" value="X 1" />
            <Group $w={56} $gap={6}><ToolButton>초기화</ToolButton></Group>
            <Group $w={74}><ToolButton>관심지표</ToolButton></Group>
            <Group $w={92}>
              <ToolButton>키움현재</ToolButton>
              <SplitButton aria-label="키움현재 목록"><Arrow /></SplitButton>
            </Group>
            <Group $w={104} $gap={5}>
              <TextBox aria-label="기준일" defaultValue="2021/04/13" />
              <Group $w={24}><ToolButton $icon aria-label="달력"><Icon name="calendar" /></ToolButton></Group>
            </Group>
            <Group $w={24}><ToolButton $icon aria-label="지표 저장"><Icon name="lineSave" /></ToolButton></Group>
            <Group $w={49}><ToolButton $tone="buy">매수</ToolButton></Group>
            <Group $w={49}><ToolButton $tone="sell">매도</ToolButton></Group>
          </ToolRow>
        </Toolbar>
        <Panels>
          <DailyPanel />
          <MinutePanel />
        </Panels>
      </Frame>
    </Window>
  </>
);

export default App;
